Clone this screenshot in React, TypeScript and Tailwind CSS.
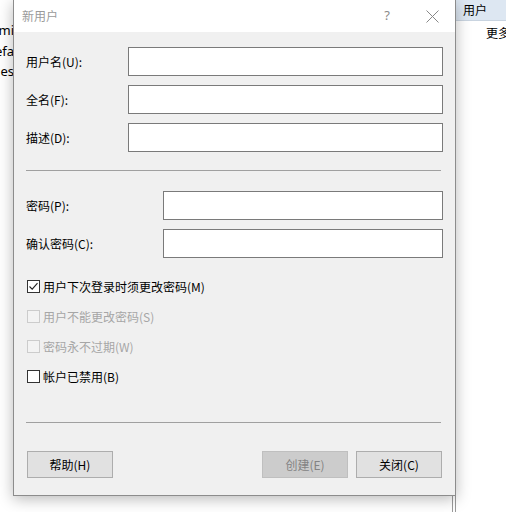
import React from 'react';

const FONT = "font-['Microsoft_YaHei','Noto_Sans_CJK_SC',sans-serif]";

const TextRow: React.FC<{ label: string; labelW: string }> = ({ label, labelW }) => (
    <div className="flex items-center h-[29px]">
        <div className={`${labelW} shrink-0 text-[12px] text-black`}>{label}</div>
        <div className="flex-1 h-[29px] bg-white border border-[#7a7a7a]" />
    </div>
);

const Check: React.FC<{ label: string; checked?: boolean; disabled?: boolean }> = ({ label, checked, disabled }) => (
    <div className="flex items-center h-[13px] gap-[3px] pl-[1px]">
        <div className={`w-[13px] h-[13px] shrink-0 border flex items-center justify-center ${disabled ? 'border-[#cccccc] bg-[#f3f3f3]' : 'border-[#333333] bg-white'}`}>
            {checked && (
                <svg width="11" height="11" viewBox="0 0 11 11">
                    <path d="M1.5 5.5 L4.2 8.2 L9.5 2.2" fill="none" stroke="#222" strokeWidth="1.1" />
                </svg>
            )}
        </div>
        <span className={`text-[12px] leading-none ${disabled ? 'text-[#a6a6a6]' : 'text-black'}`}>{label}</span>
    </div>
);

const Btn: React.FC<{ label: string; disabled?: boolean }> = ({ label, disabled }) => (
    <div className={`w-[86px] h-[27px] flex items-center justify-center text-[12px] border ${disabled
        ? 'bg-[#cccccc] border-[#bfbfbf] text-[#838383]'
        : 'bg-[#e1e1e1] border-[#adadad] text-black'}`}>
        {label}
    </div>
);

export default function App() {
    return (
        <div className={`relative w-[506px] h-[512px] bg-white overflow-hidden ${FONT}`}>
            {/* background window */}
            <div className="flex h-full">
                <div className="w-[14px] shrink-0 flex flex-col items-end pt-[20px] overflow-hidden text-[13px] leading-[20.5px] text-black font-['Segoe_UI','Noto_Sans',sans-serif]">
                    <div className="whitespace-nowrap">Admi</div>
                    <div className="whitespace-nowrap">Defa</div>
                    <div className="whitespace-nowrap">Gues</div>
                </div>
                <div className="flex-1 flex justify-end">
                    <div className="w-[4px] border-l border-r border-[#9a9a9a]" />
                </div>
                <div className="w-[50px] shrink-0 flex flex-col">
                    <div className="h-[21px] bg-[#dde7f2] border-b border-[#c9d4e0] flex items-center pl-[7px] text-[12px] text-black">用户</div>
                    <div className="pl-[30px] pt-[3px] text-[12px] text-black whitespace-nowrap overflow-hidden">更多操作</div>
                </div>
            </div>

            {/* dialog */}
            <div className="absolute left-[13px] top-0 w-[443px] h-[496px] flex flex-col bg-[#f0f0f0] border-l border-r border-b border-[#8c8c8c] shadow-[0_3px_14px_rgba(0,0,0,0.28)]">
                <div className="h-[32px] shrink-0 bg-white flex items-center pl-[8px] pr-[16px]">
                    <span className="text-[12px] text-[#9a9a9a]">新用户</span>
                    <span className="ml-auto mr-[36px] text-[13px] text-[#8a8a8a] font-['Segoe_UI','Noto_Sans',sans-serif]">?</span>
                    <svg width="13" height="13" viewBox="0 0 13 13">
                        <path d="M0.5 0.5 L12.5 12.5 M12.5 0.5 L0.5 12.5" stroke="#888" strokeWidth="1" fill="none" />
                    </svg>
                </div>

                <div className="flex-1 flex flex-col px-[12px] pt-[15px]">
                    <div className="flex flex-col gap-[9px]">
                        <TextRow label="用户名(U):" labelW="w-[102px]" />
                        <TextRow label="全名(F):" labelW="w-[102px]" />
                        <TextRow label="描述(D):" labelW="w-[102px]" />
                    </div>

                    <div className="h-px bg-[#a0a0a0] mt-[18px] mr-[2px]" />

                    <div className="flex flex-col gap-[9px] mt-[20px]">
                        <TextRow label="密码(P):" labelW="w-[137px]" />
                        <TextRow label="确认密码(C):" labelW="w-[137px]" />
                    </div>

                    <div className="flex flex-col gap-[17px] mt-[22px]">
                        <Check label="用户下次登录时须更改密码(M)" checked />
                        <Check label="用户不能更改密码(S)" disabled />
                        <Check label="密码永不过期(W)" disabled />
                        <Check label="帐户已禁用(B)" />
                    </div>

                    <div className="h-px bg-[#a0a0a0] mt-[39px] mr-[2px]" />

                    <div className="flex items-center mt-[28px] pl-[1px] pr-[1px]">
                        <Btn label="帮助(H)" />
                        <div className="ml-auto flex gap-[8px]">
                            <Btn label="创建(E)" disabled />
                            <Btn label="关闭(C)" />
                        </div>
                    </div>
                </div>
            </div>
        </div>
    );
}
